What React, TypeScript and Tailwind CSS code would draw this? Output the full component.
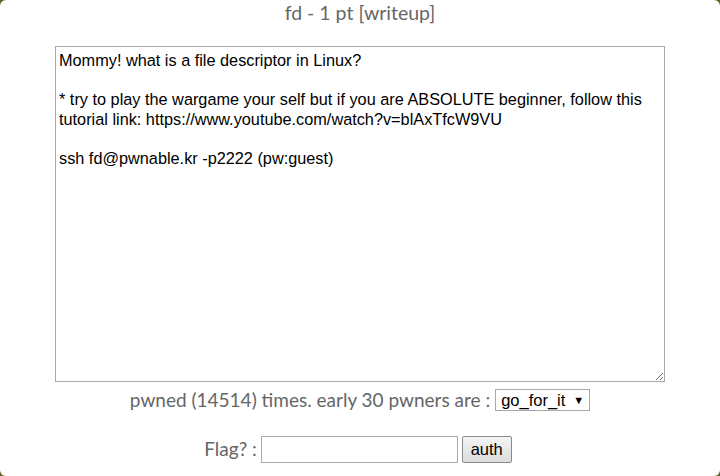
import { useState } from "react";

const challengeText = `Mommy! what is a file descriptor in Linux?

* try to play the wargame your self but if you are ABSOLUTE beginner, follow this tutorial link: https://www.youtube.com/watch?v=blAxTfcW9VU

ssh fd@pwnable.kr -p2222 (pw:guest)`;

export default function App() {
  const [flag, setFlag] = useState("");

  return (
    <div className="w-[720px] h-[476px] bg-[#66662a]">
      <div className="w-full h-full bg-white rounded-[6px] flex flex-col items-center text-[#666] font-['Lato',sans-serif]">
        <div className="h-[26px] leading-[26px] text-[19.5px]">fd - 1 pt [writeup]</div>

        <textarea
          readOnly
          value={challengeText}
          className="block mt-[20px] w-[610px] h-[336px] border border-[#a9a9a9] px-[3px] py-[4px] text-[16.3px] leading-[19.6px] text-black font-['Liberation_Sans',Arial,sans-serif] outline-none resize-y"
        />

        <div className="mt-[7px] h-[22px] flex items-center gap-[5px] text-[19px]">
          <span>pwned (14514) times. early 30 pwners are :</span>
          <div className="relative w-[95px] h-[22px] border border-[#a9a9a9] flex items-center pl-[5px] text-black text-[16.5px] font-['Liberation_Sans',Arial,sans-serif]">
            <span>go_for_it</span>
            <span className="absolute right-[5px] top-[4px] text-[11px] leading-[12px]">▼</span>
          </div>
        </div>

        <div className="mt-[25px] h-[27px] flex items-center text-[19px] pr-[4px]">
          <span className="mr-[4px]">Flag? :</span>
          <input
            value={flag}
            onChange={(e) => setFlag(e.target.value)}
            className="w-[197px] h-[27px] border border-[#a9a9a9] outline-none px-[2px] text-black"
          />
          <button className="ml-[4px] w-[50px] h-[27px] border border-[#8a8a8a] rounded-[2px] bg-gradient-to-b from-[#f5f5f5] to-[#dcdcdc] text-black text-[16.5px] font-['Liberation_Sans',Arial,sans-serif]">
            auth
          </button>
        </div>
      </div>
    </div>
  );
}
